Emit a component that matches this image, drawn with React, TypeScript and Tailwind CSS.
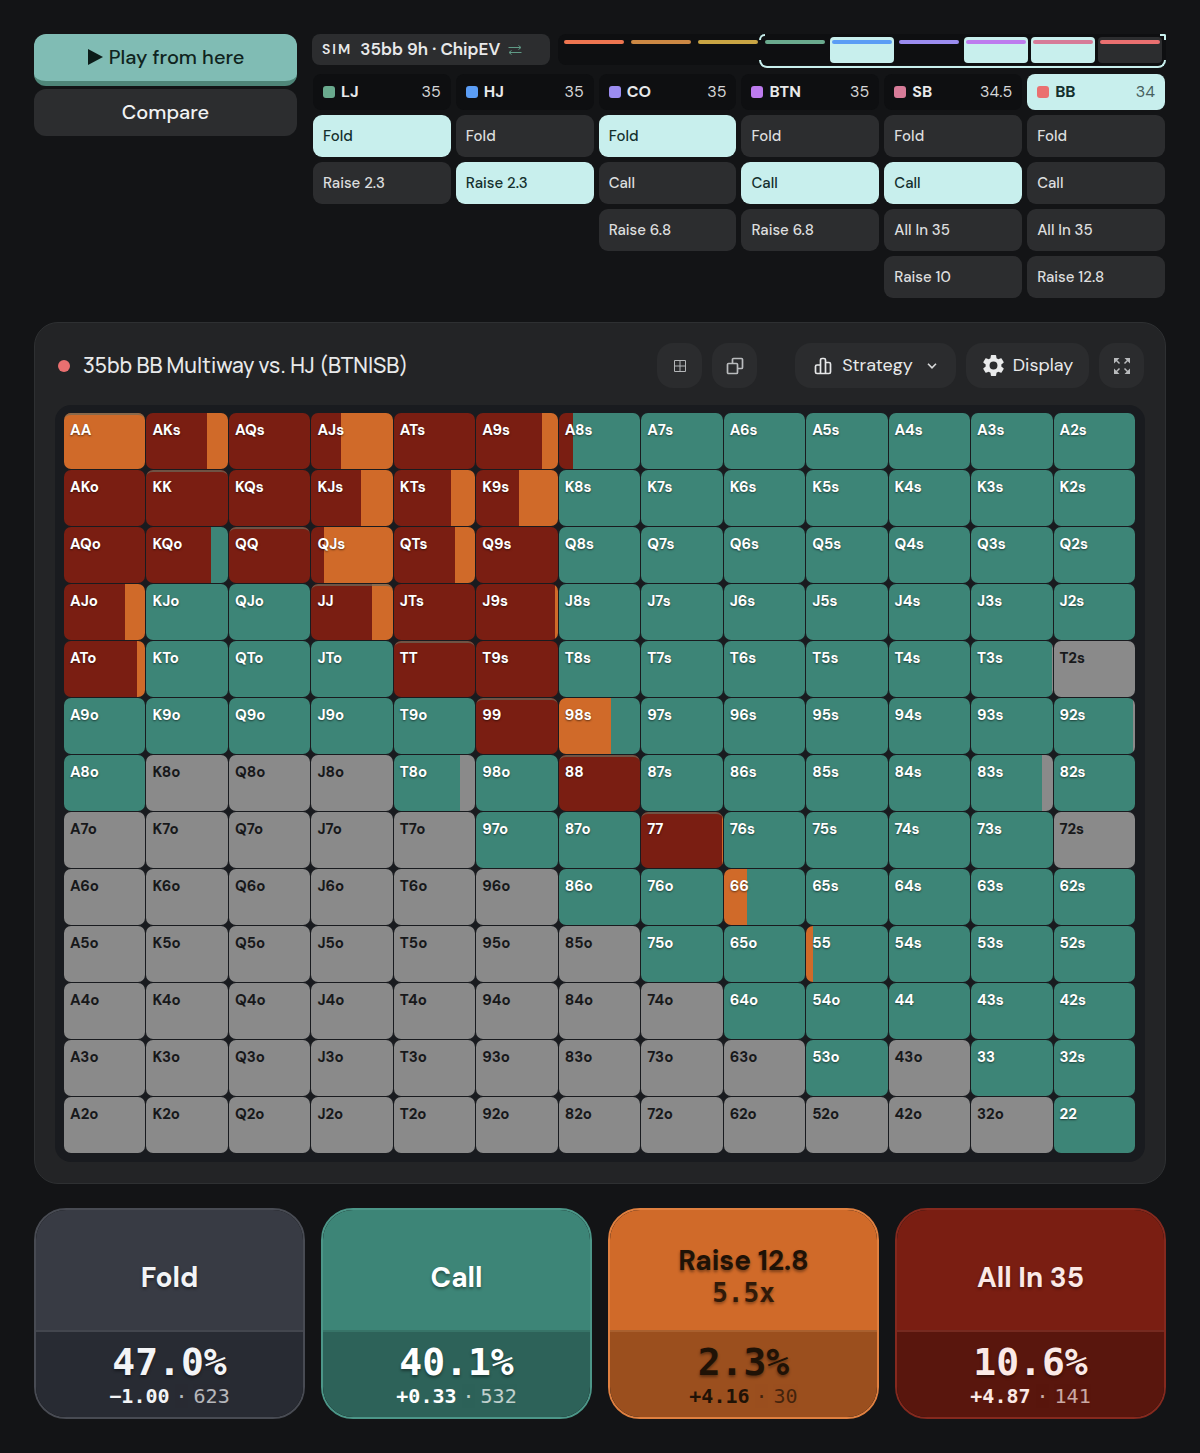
import React from "react";

const SANS = "font-['DM_Sans','Inter',sans-serif]";
const MONO = "font-['DejaVu_Sans_Mono',monospace]";

type Seat = { name: string; stack: string; color: string; actions: string[]; picked: number; active?: boolean };

const SEATS: Seat[] = [
  { name: "LJ", stack: "35", color: "bg-[#6aaa8e]", actions: ["Fold", "Raise 2.3"], picked: 0 },
  { name: "HJ", stack: "35", color: "bg-[#5b9df5]", actions: ["Fold", "Raise 2.3"], picked: 1 },
  { name: "CO", stack: "35", color: "bg-[#9b8cf0]", actions: ["Fold", "Call", "Raise 6.8"], picked: 0 },
  { name: "BTN", stack: "35", color: "bg-[#bd7bee]", actions: ["Fold", "Call", "Raise 6.8"], picked: 1 },
  { name: "SB", stack: "34.5", color: "bg-[#d67b98]", actions: ["Fold", "Call", "All In 35", "Raise 10"], picked: 1 },
  { name: "BB", stack: "34", color: "bg-[#ea7070]", actions: ["Fold", "Call", "All In 35", "Raise 12.8"], picked: -1, active: true },
];

const TIMELINE = [
  { bar: "bg-[#ee7550]", box: "" },
  { bar: "bg-[#cc8844]", box: "" },
  { bar: "bg-[#c9a544]", box: "" },
  { bar: "bg-[#6aaa8e]", box: "" },
  { bar: "bg-[#5b9df5]", box: "bg-[#c8efed]" },
  { bar: "bg-[#9b8cf0]", box: "" },
  { bar: "bg-[#bd7bee]", box: "bg-[#c8efed]" },
  { bar: "bg-[#d67b98]", box: "bg-[#c8efed]" },
  { bar: "bg-[#ea7070]", box: "bg-[#2c2d2f]" },
];

const RANKS = "AKQJT98765432";
const RED = "#7a1e12";
const ORANGE = "#d06a29";
const TEAL = "#3d8577";
const GRAY = "#8a8a8a";

/* One letter per hand: r = all in, o = raise, t = call, g = fold. */
const BASE = [
  "orrrrrttttttt",
  "rrrrrrttttttt",
  "rrrorrttttttt",
  "rttrrrttttttt",
  "rtttrrttttttg",
  "tttttrotttttt",
  "tgggttrtttttt",
  "gggggttrttttg",
  "ggggggttttttt",
  "gggggggtttttt",
  "ggggggggttttt",
  "gggggggggtgtt",
  "ggggggggggggt",
];

const FILL: Record<string, string> = { r: RED, o: ORANGE, t: TEAL, g: GRAY };

/* Mixed hands: first colour, its share in percent, second colour. */
const MIX: Record<string, [string, number, string]> = {
  AKs: [RED, 74, ORANGE],
  AJs: [RED, 37, ORANGE],
  A9s: [RED, 81, ORANGE],
  A8s: [RED, 17, TEAL],
  KJs: [RED, 61, ORANGE],
  KTs: [RED, 70, ORANGE],
  K9s: [RED, 52, ORANGE],
  KQo: [RED, 79, TEAL],
  QJs: [RED, 16, ORANGE],
  QTs: [RED, 75, ORANGE],
  AJo: [RED, 75, ORANGE],
  JJ: [RED, 74, ORANGE],
  J9s: [RED, 96, ORANGE],
  ATo: [RED, 90, ORANGE],
  T3s: [TEAL, 99, GRAY],
  "98s": [ORANGE, 64, TEAL],
  "92s": [TEAL, 97, GRAY],
  T8o: [TEAL, 82, GRAY],
  "83s": [TEAL, 87, GRAY],
  "77": [RED, 99, ORANGE],
  "66": [ORANGE, 29, TEAL],
  "55": [ORANGE, 8, TEAL],
};

/* Pairs whose top edge is shaded. */
const SHADED = ["AA", "KK", "QQ", "JJ", "TT", "99", "88", "77"];

function handName(r: number, c: number) {
  if (r === c) return RANKS[r] + RANKS[r];
  return r < c ? RANKS[r] + RANKS[c] + "s" : RANKS[c] + RANKS[r] + "o";
}

function HandCell({ r, c }: { r: number; c: number }) {
  const name = handName(r, c);
  const key = BASE[r][c];
  const mix = MIX[name];
  const background = mix
    ? `linear-gradient(to right, ${mix[0]} ${mix[1]}%, ${mix[2]} ${mix[1]}%)`
    : FILL[key];
  return (
    <button
      type="button"
      style={{ background }}
      className={`flex h-14 items-start overflow-hidden rounded-[7px] text-left ${key === "g" ? "text-[#17181a]" : "text-white [text-shadow:0_1px_2px_rgba(0,0,0,0.55)]"}`}
    >
      <span
        className={`h-full w-full rounded-t-[7px] border-t-2 pt-1 pl-1.5 text-[15px] leading-[22px] font-bold ${SHADED.includes(name) ? "border-[#6b6a5a]/70" : "border-transparent"}`}
      >
        {name}
      </span>
    </button>
  );
}

const CARDS = [
  {
    label: "Fold", sub: "", pct: "47.0%", ev: "−1.00", combos: "623",
    top: "bg-[#383b44]", bottom: "bg-[#282b33] border-[#43464e]", edge: "border-[#484b53]", ink: "text-[#f3f4f6]",
  },
  {
    label: "Call", sub: "", pct: "40.1%", ev: "+0.33", combos: "532",
    top: "bg-[#3d8577]", bottom: "bg-[#2d6259] border-[#377468]", edge: "border-[#4c9688]", ink: "text-white",
  },
  {
    label: "Raise 12.8", sub: "5.5x", pct: "2.3%", ev: "+4.16", combos: "30",
    top: "bg-[#d06a29]", bottom: "bg-[#9b4f1e] border-[#a9602f]", edge: "border-[#e08040]", ink: "text-[#1f1206]",
  },
  {
    label: "All In 35", sub: "", pct: "10.6%", ev: "+4.87", combos: "141",
    top: "bg-[#7a1e12]", bottom: "bg-[#59160d] border-[#762a20]", edge: "border-[#85291e]", ink: "text-[#fbe9e6]",
  },
];

function GridIcon() {
  return (
    <svg width="12" height="12" viewBox="0 0 12 12" fill="none" stroke="#b4b6b8" strokeWidth="1">
      <path d="M.5.5h11v11H.5zM6 .5v11M.5 6h11" />
    </svg>
  );
}

function CopyIcon() {
  return (
    <svg width="18" height="18" viewBox="0 0 18 18" fill="none" stroke="#b9bbbd" strokeWidth="1.7">
      <rect x="1.5" y="6.5" width="10" height="10" rx="1" />
      <path d="M6.5 6.5V2.500A1 1 0 0 1 7.500 1.500h8A1 1 0 0 1 16.500 2.500v8a1 1 0 0 1-1 1h-4" />
    </svg>
  );
}

function BarsIcon() {
  return (
    <svg width="18" height="18" viewBox="0 0 18 18" fill="none" stroke="#e6e7e8" strokeWidth="1.700" strokeLinejoin="round">
      <path d="M6.500 16.500V3A1.500 1.500 0 0 1 8 1.500h2A1.500 1.500 0 0 1 11.500 3v13.500M6.500 8H3A1.500 1.500 0 0 0 1.500 9.500v5.500A1.500 1.500 0 0 0 3 16.500h12a1.500 1.500 0 0 0 1.500-1.500V7A1.500 1.500 0 0 0 15 5.500h-3.500" />
    </svg>
  );
}

function GearIcon() {
  return (
    <svg width="23" height="23" viewBox="1.500 1.500 21 21" fill="#e9eaeb">
      <path d="M19.140 12.940c.04-.3.06-.61.06-.94 0-.32-.02-.64-.07-.94l2.030-1.580a.49.49 0 0 0 .12-.61l-1.920-3.320a.488.488 0 0 0-.59-.22l-2.390.96c-.5-.38-1.030-.7-1.620-.94l-.36-2.540a.484.484 0 0 0-.48-.41h-3.840c-.24 0-.43.17-.47.41l-.36 2.540c-.59.24-1.130.57-1.620.94l-2.390-.96c-.22-.08-.47 0-.59.22L2.740 8.870c-.12.21-.08.47.12.61l2.030 1.580c-.05.3-.09.63-.09.94s.02.64.07.94l-2.030 1.580a.49.49 0 0 0-.12.61l1.920 3.320c.12.22.37.29.59.22l2.390-.96c.5.38 1.030.7 1.620.94l.36 2.540c.05.24.24.41.48.41h3.840c.24 0 .44-.17.47-.41l.36-2.540c.59-.24 1.130-.56 1.620-.94l2.390.96c.22.08.47 0 .59-.22l1.920-3.320c.12-.22.07-.47-.12-.61l-2.010-1.580zM12 15.600A3.600 3.600 0 1 1 12 8.400a3.600 3.600 0 0 1 0 7.200z" />
    </svg>
  );
}

function ExpandIcon() {
  return (
    <svg width="16" height="16" viewBox="0 0 16 16" fill="#b9bbbd" stroke="#b9bbbd" strokeWidth="1.500">
      <path strokeWidth="0" d="M0 0h5.500L0 5.500zM16 0v5.500L10.500 0zM0 16v-5.500L5.500 16zM16 16h-5.500L16 10.500z" />
      <path d="M1.500 1.500l4 4M14.500 1.500l-4 4M1.500 14.500l4-4M14.500 14.500l-4-4" />
    </svg>
  );
}

function SwapIcon() {
  return (
    <svg width="14" height="10" viewBox="0 0 14 10" fill="none" stroke="#5f9a86" strokeWidth="1">
      <path d="M.5 2.500h12M10.500.5l2.500 2-2.500 2M13.500 7.500h-12M3.500 5.500L1 7.500l2.500 2" />
    </svg>
  );
}

const TOOL = "flex h-[45px] items-center justify-center rounded-2xl bg-[#2b2c2e]";

export default function App() {
  return (
    <main className={`min-h-screen bg-[#131416] px-[34px] pt-[34px] pb-[34px] text-[#e8e9ea] ${SANS}`}>
      <section className="grid min-h-[263px] grid-cols-[263px_1fr] gap-[15px]">
        <div className="flex flex-col gap-[3px]">
          <button type="button" className="flex h-[52px] items-center justify-center gap-1.5 rounded-xl border-b-[5px] border-[#4f8679] bg-[#80bcb4] pb-0.5 text-[20px] font-medium text-[#0f2420]">
            <svg width="16" height="16" viewBox="0 0 16 16" fill="#0c1c19"><path d="M1 0l15 8-15 8z" /></svg>
            Play from here
          </button>
          <button type="button" className="h-[47px] rounded-xl bg-[#2c2d2f] pb-0.5 text-[20px] font-medium text-[#f1f2f3]">
            Compare
          </button>
        </div>

        <div className="flex flex-col gap-[9px]">
          <div className="grid grid-cols-[238px_1fr] gap-2">
            <button type="button" className="flex h-[31px] items-center rounded-lg bg-[#2c2d2f] pl-2.5 text-[17px] font-semibold">
              <span className="text-[14px] tracking-[2px]">SIM</span>
              <span className="mr-2 ml-2">35bb 9h · ChipEV</span>
              <SwapIcon />
            </button>
            <div className="relative grid grid-cols-9 gap-[3px] rounded-lg bg-[#0e0f11] px-1 pt-[3px]">
              {TIMELINE.map((t, i) => (
                <div key={i} className={`h-[26px] rounded-[4px] px-0.5 pt-[3px] ${t.box}`}>
                  <div className={`h-1 rounded-full ${t.bar}`} />
                </div>
              ))}
              <div className="absolute top-0 left-[33%] h-1.5 w-1.5 rounded-tl-md border-t-2 border-l-2 border-[#c8efed]" />
              <div className="absolute top-0 right-0 h-1.5 w-1.5 rounded-tr-xs border-t-2 border-r-2 border-[#c8efed]" />
              <div className="absolute right-0 -bottom-[3px] left-[33%] h-2 rounded-b-lg border-x-2 border-b-2 border-[#c8efed]" />
            </div>
          </div>

          <div className="grid grid-cols-6 items-start gap-[5px] px-px">
            {SEATS.map((s) => (
              <div key={s.name} className="flex flex-col gap-[5px]">
                <div className={`flex h-9 items-center rounded-lg px-2.5 text-[16px] ${s.active ? "bg-[#c8efed] text-[#14302d]" : "bg-[#0e0f11]"}`}>
                  <span className={`mr-1.5 size-3 rounded-[3px] ${s.color}`} />
                  <span className="font-bold">{s.name}</span>
                  <span className={`ml-auto ${s.active ? "text-[#47605e]" : "text-[#d5d6d8]"}`}>{s.stack}</span>
                </div>
                {s.actions.map((a, i) => (
                  <button
                    type="button"
                    key={a}
                    className={`h-[42px] rounded-[9px] px-2.5 text-left text-[15px] font-medium ${i === s.picked ? "bg-[#c8efed] text-[#14302d]" : "bg-[#2c2d2f] text-[#dcddde]"}`}
                  >
                    {a}
                  </button>
                ))}
              </div>
            ))}
          </div>
        </div>
      </section>

      <section className="mt-6 rounded-[24px] border border-[#2e3032] bg-[#232426] px-5 pt-5 pb-[21px]">
        <header className="flex items-center pr-px pl-[3px]">
          <span className="mr-[13px] size-3 rounded-full bg-[#ea7070]" />
          <h1 className="font-['Manrope','DM_Sans','Inter',sans-serif] text-[21px] font-medium">35bb BB Multiway vs. HJ (BTNISB)</h1>
          <div className="ml-auto flex items-center gap-2.5">
            <button type="button" aria-label="Grid view" className={`w-[45px] ${TOOL}`}><GridIcon /></button>
            <button type="button" aria-label="Copy" className={`mr-[28px] w-[45px] ${TOOL}`}><CopyIcon /></button>
            <button type="button" className={`w-[161px] gap-2.5 text-[18px] ${TOOL}`}>
              <BarsIcon />
              Strategy
              <svg className="ml-1" width="10" height="6" viewBox="0 0 10 6" fill="none" stroke="#d8d9da" strokeWidth="1.600"><path d="M1 .8l4 4 4-4" /></svg>
            </button>
            <button type="button" className={`w-[123px] gap-2 text-[18px] ${TOOL}`}>
              <GearIcon />
              Display
            </button>
            <button type="button" aria-label="Full screen" className={`w-[45px] ${TOOL}`}><ExpandIcon /></button>
          </div>
        </header>
        <div className="mt-[17px] grid grid-cols-13 gap-px rounded-[16px] bg-[#191b1f] pt-2 pr-2.5 pb-[9px] pl-[9px]">
          {BASE.map((row, r) => row.split("").map((_, c) => <HandCell key={`${r}-${c}`} r={r} c={c} />))}
        </div>
      </section>

      <section className="mt-6 grid grid-cols-4 gap-4">
        {CARDS.map((c) => (
          <button type="button" key={c.label} className={`flex flex-col overflow-hidden rounded-[32px] border-2 ${c.edge} ${c.ink}`}>
            <span className={`flex h-[120px] w-full flex-col items-center justify-center pt-3.5 text-[28px] leading-[33px] font-bold [text-shadow:0_2px_3px_rgba(0,0,0,0.4)] ${c.top}`}>
              {c.label}
              {c.sub && <span className={`text-[26px] font-bold opacity-90 ${MONO}`}>{c.sub}</span>}
            </span>
            <span className={`flex h-[87px] w-full flex-col items-center border-t-2 pt-2 ${MONO} ${c.bottom}`}>
              <span className="text-[38px] leading-[44px] font-bold [text-shadow:0_2px_3px_rgba(0,0,0,0.4)]">{c.pct}</span>
              <span className="flex gap-1.5 text-[20px] leading-6">
                <b>{c.ev}</b>
                <span className="opacity-70">·</span>
                <span className="opacity-70">{c.combos}</span>
              </span>
            </span>
          </button>
        ))}
      </section>
    </main>
  );
}
